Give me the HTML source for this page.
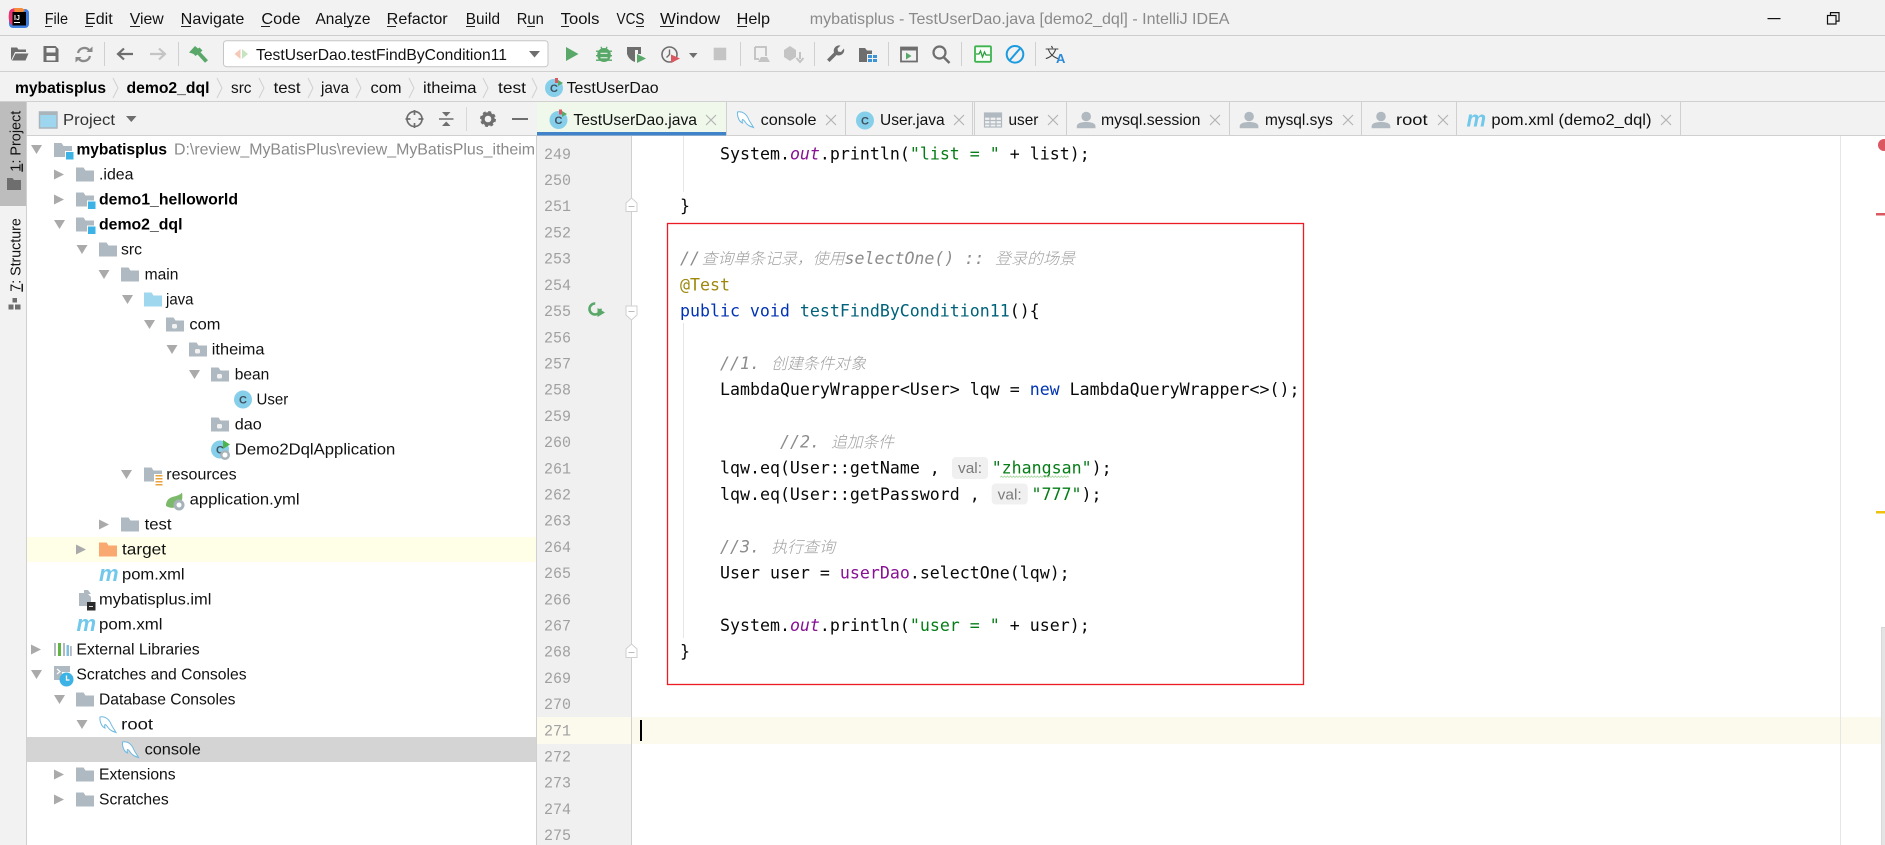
<!DOCTYPE html>
<html><head><meta charset="utf-8"><title>IntelliJ IDEA</title>
<style>
html,body{margin:0;padding:0;width:1885px;height:845px;overflow:hidden;background:#f2f2f2}
svg{display:block}
.u{font-family:"Liberation Sans","Noto Sans CJK SC",sans-serif;font-size:16px;fill:#111}
.b{font-weight:bold;fill:#000}
.c{font-family:"DejaVu Sans Mono","Liberation Mono",monospace;font-size:16.6px;fill:#080808;white-space:pre}
.n{font-family:"Liberation Mono",monospace;font-size:16px;fill:#a0a0a0}
.cm{font-style:italic;fill:#8c8c8c}
.cj{font-family:"Noto Sans CJK SC",sans-serif;font-size:15.8px;font-style:italic;fill:#a0a0a0;font-weight:300}
.k{fill:#0033b3}.s{fill:#067d17}.p{fill:#871094}.f{fill:#00627a}
.ci{font-style:italic;fill:#871094}
.cc{font-family:"Liberation Sans",sans-serif;font-size:11px;font-weight:bold;fill:#3f5260}
.mm{font-family:"Liberation Sans",sans-serif;font-size:22px;font-weight:bold;font-style:italic;fill:#72c8ea}
</style></head><body>
<svg xmlns="http://www.w3.org/2000/svg" width="1885" height="845" viewBox="0 0 1885 845">
<defs>
<path id="fd" d="M0 0h7.500l2 3H18v11H0z" fill="#afb9c1"/>
<g id="pk"><use href="#fd"/><rect x="6" y="6.500" width="5" height="4.500" rx="1.500" fill="#f2f2f2"/></g>
<g id="mod"><path d="M0 0h7.500l2 3H18v11H0z" fill="#afb9c1"/><rect x="11" y="8" width="8.500" height="8.500" fill="#fff"/><rect x="12" y="9" width="7.500" height="7.500" fill="#3db3e5"/></g>
<circle id="cl" cx="9" cy="9" r="9" fill="#86cfea"/>
<path id="ad" d="M0 0h11L5.500 9z" fill="#aaa"/>
<path id="ar" d="M0 0l10 5-10 5z" fill="#aaa"/>
<path id="x" d="M0 0l10 10M10 0L0 10" stroke="#b4b4b4" stroke-width="1.200" fill="none"/>
<g id="dol" fill="#fff" stroke="#6db8e2" stroke-width="1"><path d="M1 1C6 0 10 3 12 8c1 2.500 3 5 5 8.500-3-1-6-2-8-5-1-1.500-2-3-3-3-.5 1-.5 2 0 3.500C3 11 .5 6 1 1z"/></g>
<g id="per" fill="#b0b9c0"><circle cx="9.400" cy="5" r="4.800"/><path d="M0 16.700v-2C0 11.500 5 10.500 9.400 10.500s9.300 1 9.300 4.200v2z"/></g>
</defs>

<!-- chrome backgrounds -->
<rect width="1885" height="845" fill="#f2f2f2"/>
<rect y="35" width="1885" height="1" fill="#cdcdcd"/>
<rect y="71" width="1885" height="1" fill="#d0d0d0"/>
<rect y="101" width="1885" height="1" fill="#d0d0d0"/>
<rect y="135" width="1885" height="1" fill="#d0d0d0"/>

<!-- logo -->
<rect x="9" y="9" width="20" height="19" rx="4" fill="#3f7fe0"/>
<path d="M9 13q1-5 7-5h6l-3 6-6 12-3-3q-2-4-1-10z" fill="#e8336f"/>
<path d="M14 8h8l3 2-4 4h-6z" fill="#f68b3a"/>
<rect x="12.500" y="12" width="13.500" height="13.500" fill="#000"/>
<text x="14" y="20" font-family="Liberation Sans,sans-serif" font-size="7" font-weight="bold" fill="#fff">IJ</text>
<rect x="14" y="22" width="6" height="1" fill="#fff"/>

<!-- menu -->
<text class="u" x="44.700" y="24" textLength="23.300" lengthAdjust="spacingAndGlyphs">File</text>
<text class="u" x="85" y="24" textLength="27.700" lengthAdjust="spacingAndGlyphs">Edit</text>
<text class="u" x="129.700" y="24" textLength="34" lengthAdjust="spacingAndGlyphs">View</text>
<text class="u" x="180.700" y="24" textLength="63.700" lengthAdjust="spacingAndGlyphs">Navigate</text>
<text class="u" x="261.400" y="24" textLength="39" lengthAdjust="spacingAndGlyphs">Code</text>
<text class="u" x="315.500" y="24" textLength="55" lengthAdjust="spacingAndGlyphs">Analyze</text>
<text class="u" x="386.700" y="24" textLength="61" lengthAdjust="spacingAndGlyphs">Refactor</text>
<text class="u" x="465.800" y="24" textLength="34.200" lengthAdjust="spacingAndGlyphs">Build</text>
<text class="u" x="516.800" y="24" textLength="27" lengthAdjust="spacingAndGlyphs">Run</text>
<text class="u" x="560.700" y="24" textLength="38.700" lengthAdjust="spacingAndGlyphs">Tools</text>
<text class="u" x="616.500" y="24" textLength="28" lengthAdjust="spacingAndGlyphs">VCS</text>
<text class="u" x="660" y="24" textLength="60" lengthAdjust="spacingAndGlyphs">Window</text>
<text class="u" x="736.600" y="24" textLength="33.400" lengthAdjust="spacingAndGlyphs">Help</text>
<g fill="#222">
<rect x="45" y="26" width="7" height="1"/><rect x="85" y="26" width="8" height="1"/><rect x="130" y="26" width="10" height="1"/><rect x="181" y="26" width="10" height="1"/><rect x="261" y="26" width="9" height="1"/><rect x="344" y="26" width="8" height="1"/><rect x="387" y="26" width="9" height="1"/><rect x="466" y="26" width="9" height="1"/><rect x="527" y="26" width="8" height="1"/><rect x="561" y="26" width="8" height="1"/><rect x="636" y="26" width="8" height="1"/><rect x="660" y="26" width="14" height="1"/><rect x="737" y="26" width="10" height="1"/>
</g>
<text class="u" x="809.800" y="24" textLength="419.700" lengthAdjust="spacingAndGlyphs" style="fill:#8a8a8a">mybatisplus - TestUserDao.java [demo2_dql] - IntelliJ IDEA</text>
<rect x="1767.500" y="18" width="13" height="1.200" fill="#111"/>
<g fill="none" stroke="#111" stroke-width="1.200"><rect x="1827.500" y="15.500" width="8.500" height="8.500"/><path d="M1830.500 15.500V12.600h8.500v8.500h-3"/></g>

<!-- toolbar -->
<path d="M11 60.500V47.500h6l1.500 2H26v2.500H15l-4 8.500zm1 0l3.500-7H28.500l-3 7z" fill="#6e6e6e"/>
<path d="M43.500 46h12l3 3v13h-15zM46.500 48v4.500h9V48zM46.500 56v4.500h9V56z" fill="#6e6e6e" fill-rule="evenodd"/>
<g fill="none" stroke="#8a8a8a" stroke-width="2.300"><path d="M78 53a6.500 6.500 0 0 1 11.500-2.500"/><path d="M90 56a6.500 6.500 0 0 1-11.500 2.500"/></g>
<path d="M86.500 52h6v-5.500zM81.500 57h-6v5.500z" fill="#8a8a8a"/>
<rect x="104" y="42" width="1" height="24" fill="#d0d0d0"/>
<path d="M133 54H119M124 48.500l-6 5.500 6 5.500" fill="none" stroke="#6e6e6e" stroke-width="2.200"/>
<path d="M150 54h14M159 48.500l6 5.500-6 5.500" fill="none" stroke="#c4c4c4" stroke-width="2.200"/>
<rect x="178" y="42" width="1" height="24" fill="#d0d0d0"/>
<path d="M189 52.500l6-6.500 3 2.500 1.500-1 3 3-2 1.800 7.500 8-3 2.500-7.500-8.300-2 1.500-2-2-2-.7z" fill="#59a869"/>
<rect x="223.500" y="40.700" width="324.500" height="26" rx="3" fill="#fff" stroke="#c6c6c6"/>
<path d="M240.500 49v10l-6-5z" fill="#f6c8b8"/><path d="M242 49v10l6-5z" fill="#c5e5c0"/>
<text class="u" x="256" y="60" textLength="251" lengthAdjust="spacingAndGlyphs">TestUserDao.testFindByCondition11</text>
<path d="M529 51h11l-5.500 6.500z" fill="#6e6e6e"/>
<path d="M566 47l12.500 7-12.500 7z" fill="#59a869"/>
<g fill="#59a869"><ellipse cx="604" cy="55" rx="6.800" ry="7"/><path d="M601.500 46.500l1.500 3h2l1.500-3 1 .5-1 4h-5l-1-4z"/><rect x="596" y="50.500" width="16" height="1.400"/><rect x="596" y="55" width="16" height="1.400"/><rect x="596" y="59.500" width="16" height="1.400"/></g>
<rect x="600.500" y="52.800" width="7" height="1.100" fill="#e8f3ea"/><rect x="600.500" y="57.200" width="7" height="1.100" fill="#e8f3ea"/>
<path d="M627 47h14v7h-3v-4h-3v12q-6-2-8-8z" fill="#6e6e6e"/><path d="M637 54l9 4.500-9 4.500z" fill="#59a869"/>
<circle cx="669.500" cy="54.500" r="7.500" fill="none" stroke="#6e6e6e" stroke-width="1.600"/><path d="M669.500 49.500v5l-3 3" fill="none" stroke="#6e6e6e" stroke-width="1.400"/>
<path d="M671 54.500l9 4-9 4.500z" fill="#db5860"/>
<path d="M689 53h8.500l-4.200 5z" fill="#6e6e6e"/>
<rect x="713.700" y="47.700" width="12.500" height="12.500" fill="#c4c4c4"/>
<rect x="740" y="42" width="1" height="24" fill="#d0d0d0"/>
<path d="M755 47h11v9M755 47v12h4" fill="none" stroke="#c0c0c0" stroke-width="1.800"/><path d="M758 62l3-5h6l3 5z" fill="#c4c4c4"/>
<path d="M784 50l6-4 6 4v7l-6 4-6-4z" fill="#c4c4c4"/><path d="M800 52v7M796.500 58l3.500 4 3.500-4" fill="none" stroke="#c4c4c4" stroke-width="2"/>
<rect x="814" y="42" width="1" height="24" fill="#d0d0d0"/>
<path d="M844 48.500a5.500 5.500 0 0 1-7.500 6.500l-7 7-2.500-2.500 7-7a5.500 5.500 0 0 1 6.500-7l-3 3 .5 3 3 .5z" fill="#6e6e6e"/>
<path d="M859 48h6l2 2.500h5v3.500h-5v8h-8z" fill="#6e6e6e"/><g fill="#3d93d3"><rect x="868" y="55" width="4" height="3"/><rect x="873" y="55" width="4" height="3"/><rect x="868" y="59" width="4" height="3"/><rect x="873" y="59" width="4" height="3"/></g>
<rect x="888" y="42" width="1" height="24" fill="#d0d0d0"/>
<rect x="901" y="47.500" width="16" height="14" fill="none" stroke="#6e6e6e" stroke-width="1.800"/><rect x="901" y="47.500" width="16" height="3" fill="#6e6e6e"/><path d="M906 52.500l5.500 3.500-5.500 3.500z" fill="#59a869"/>
<circle cx="939.500" cy="52.500" r="6" fill="none" stroke="#6e6e6e" stroke-width="2.200"/><path d="M943.500 57l6 6" stroke="#6e6e6e" stroke-width="2.500"/>
<rect x="961" y="42" width="1" height="24" fill="#d0d0d0"/>
<rect x="975" y="46.300" width="16" height="15.500" rx="1" fill="#f7fff7" stroke="#3eb34f" stroke-width="1.800"/><path d="M976 54h3l1.500-3 2 6 2-5 1.500 3h4" fill="none" stroke="#2e9e40" stroke-width="1.300"/>
<circle cx="1015" cy="54.300" r="8.300" fill="none" stroke="#1d9be0" stroke-width="2"/><path d="M1010 60l10-11.500" stroke="#1d9be0" stroke-width="2"/>
<rect x="1035" y="42" width="1" height="24" fill="#d0d0d0"/>
<text x="1045" y="58" font-family="Noto Sans CJK SC,sans-serif" font-size="14" fill="#444">文</text>
<text x="1056" y="63" font-family="Liberation Sans,sans-serif" font-weight="bold" font-size="13" fill="#2d8ad6">A</text>

<!-- breadcrumbs -->
<text class="u b" x="15" y="93" textLength="91" lengthAdjust="spacingAndGlyphs">mybatisplus</text>
<text class="u b" x="126.500" y="93" textLength="83" lengthAdjust="spacingAndGlyphs">demo2_dql</text>
<text class="u" x="231" y="93" textLength="20.500" lengthAdjust="spacingAndGlyphs">src</text>
<text class="u" x="273.600" y="93" textLength="27" lengthAdjust="spacingAndGlyphs">test</text>
<text class="u" x="321" y="93" textLength="28" lengthAdjust="spacingAndGlyphs">java</text>
<text class="u" x="370.500" y="93" textLength="31" lengthAdjust="spacingAndGlyphs">com</text>
<text class="u" x="423" y="93" textLength="53.500" lengthAdjust="spacingAndGlyphs">itheima</text>
<text class="u" x="498" y="93" textLength="28" lengthAdjust="spacingAndGlyphs">test</text>
<text class="u" x="566.600" y="93" textLength="92" lengthAdjust="spacingAndGlyphs">TestUserDao</text>
<g fill="none" stroke="#d0d0d0" stroke-width="1"><path d="M113 78l5 10-5 10M217 78l5 10-5 10M259 78l5 10-5 10M308 78l5 10-5 10M356 78l5 10-5 10M409 78l5 10-5 10M483 78l5 10-5 10M532 78l5 10-5 10"/></g>
<use href="#cl" x="545" y="79"/><text class="cc" x="550" y="92">C</text><path d="M558 80l5 3-5 3z" fill="#59a869"/><rect x="555" y="78" width="3" height="5" fill="#db5860"/>

<!-- left strip -->
<rect x="0" y="102" width="26" height="104" fill="#bdbdbd"/>
<rect x="26" y="102" width="1" height="743" fill="#d0d0d0"/>
<text class="u" transform="translate(20.500,171.700) rotate(-90)" style="font-size:14.500px" textLength="61" lengthAdjust="spacingAndGlyphs"><tspan text-decoration="underline">1</tspan>: Project</text>
<path d="M7 178h5.500l1.500 2h7v10H7z" fill="#6e6e6e"/>
<text class="u" transform="translate(20.500,291.700) rotate(-90)" style="font-size:14.500px" textLength="73.500" lengthAdjust="spacingAndGlyphs"><tspan text-decoration="underline">7</tspan>: Structure</text>
<g fill="#6e6e6e"><rect x="12.500" y="298" width="4.500" height="4.500"/><rect x="8.500" y="304.500" width="5" height="5"/><rect x="15" y="304.500" width="5.500" height="5"/></g>

<!-- project header -->
<rect x="39.500" y="112" width="17.500" height="16" fill="#9fd6ef" stroke="#a9b4bb" stroke-width="1.500"/>
<rect x="39.500" y="112" width="17.500" height="3" fill="#a9b4bb"/>
<text class="u" x="63" y="125" textLength="52" lengthAdjust="spacingAndGlyphs" style="fill:#333">Project</text>
<path d="M126 116h10.500l-5.200 6z" fill="#6e6e6e"/>
<circle cx="414.500" cy="119" r="7.500" fill="none" stroke="#6e6e6e" stroke-width="1.700"/><path d="M414.500 110v5M414.500 123v5M405.500 119h5M418.500 119h5" stroke="#6e6e6e" stroke-width="1.700"/>
<path d="M439 119h14.500" stroke="#6e6e6e" stroke-width="1.500"/><path d="M442 112h8.500l-4.250 4.500zM442 126h8.500l-4.250-4.500z" fill="#6e6e6e"/>
<rect x="466" y="107" width="1" height="24" fill="#d8d8d8"/>
<circle cx="488" cy="119" r="5" fill="none" stroke="#6e6e6e" stroke-width="3.400"/><circle cx="488" cy="119" r="7" fill="none" stroke="#6e6e6e" stroke-width="2" stroke-dasharray="3 2.500"/>
<rect x="512" y="118" width="16" height="2" fill="#6e6e6e"/>

<!-- tree -->
<rect x="27" y="136" width="509" height="709" fill="#fff"/>
<rect x="536" y="136" width="1" height="709" fill="#d0d0d0"/>
<rect x="27" y="537" width="509" height="25" fill="#fffee6"/>
<rect x="27" y="737" width="509" height="25" fill="#d4d4d4"/>

<use href="#ad" x="31" y="145"/><use href="#mod" x="54" y="143"/>
<text class="u b" x="76.500" y="154.500" textLength="90.500" lengthAdjust="spacingAndGlyphs">mybatisplus</text>
<text class="u" x="174" y="154.500" textLength="361" lengthAdjust="spacingAndGlyphs" style="fill:#8a8a8a">D:\review_MyBatisPlus\review_MyBatisPlus_itheim</text>

<use href="#ar" x="54" y="169.500"/><use href="#fd" x="76" y="167.500"/>
<text class="u" x="99" y="179.500" textLength="34.500" lengthAdjust="spacingAndGlyphs">.idea</text>

<use href="#ar" x="54" y="194.500"/><use href="#mod" x="76" y="192.500"/>
<text class="u b" x="99" y="204.500" textLength="139" lengthAdjust="spacingAndGlyphs">demo1_helloworld</text>

<use href="#ad" x="54" y="220"/><use href="#mod" x="76" y="217.500"/>
<text class="u b" x="99" y="229.500" textLength="83.500" lengthAdjust="spacingAndGlyphs">demo2_dql</text>

<use href="#ad" x="76.500" y="245"/><use href="#fd" x="99" y="242.500"/>
<text class="u" x="121" y="254.500" textLength="21" lengthAdjust="spacingAndGlyphs">src</text>

<use href="#ad" x="98.500" y="270"/><use href="#fd" x="121" y="267.500"/>
<text class="u" x="144.600" y="279.500" textLength="33.800" lengthAdjust="spacingAndGlyphs">main</text>

<use href="#ad" x="122" y="295"/><path d="M144 292.500h7.500l2 3H162v11h-18z" fill="#9fd7ee"/>
<text class="u" x="166" y="304.500" textLength="27.500" lengthAdjust="spacingAndGlyphs">java</text>

<use href="#ad" x="144" y="320"/><use href="#pk" x="166" y="317.500"/>
<text class="u" x="189.400" y="329.500" textLength="31" lengthAdjust="spacingAndGlyphs">com</text>

<use href="#ad" x="166.500" y="345"/><use href="#pk" x="189" y="342.500"/>
<text class="u" x="211.800" y="354.500" textLength="52.700" lengthAdjust="spacingAndGlyphs">itheima</text>

<use href="#ad" x="189" y="370"/><use href="#pk" x="211" y="367.500"/>
<text class="u" x="234.800" y="379.500" textLength="34.500" lengthAdjust="spacingAndGlyphs">bean</text>

<use href="#cl" x="234" y="390.500"/><text class="cc" x="239" y="403.500">C</text>
<text class="u" x="256.500" y="404.500" textLength="31.700" lengthAdjust="spacingAndGlyphs">User</text>

<use href="#pk" x="211" y="417.500"/>
<text class="u" x="234.800" y="429.500" textLength="27" lengthAdjust="spacingAndGlyphs">dao</text>

<use href="#cl" x="211" y="440.500"/><text class="cc" x="216" y="453.500">C</text><path d="M223 440l7 4.500-7 4.500z" fill="#4db34f"/><circle cx="225" cy="455" r="5" fill="#aab4bb"/><circle cx="225" cy="455" r="2.500" fill="#fff"/>
<text class="u" x="234.800" y="454.500" textLength="160.500" lengthAdjust="spacingAndGlyphs">Demo2DqlApplication</text>

<use href="#ad" x="121" y="470"/><use href="#fd" x="144" y="467.500"/>
<rect x="154" y="474" width="9" height="11" fill="#fff"/><g fill="#e8a33d"><rect x="155.500" y="475" width="7" height="1.500"/><rect x="155.500" y="478" width="7" height="1.500"/><rect x="155.500" y="481" width="7" height="1.500"/><rect x="155.500" y="484" width="7" height="1.500"/></g>
<text class="u" x="166.300" y="479.500" textLength="70.300" lengthAdjust="spacingAndGlyphs">resources</text>

<path d="M166 506c0-8 6-9 10-10 3-1 5-2 6-3.500 1 5 0 10-3 13-4 3-9 3-13 .5z" fill="#7db96b"/><circle cx="179" cy="505" r="5.500" fill="#a7b2ba"/><circle cx="179" cy="505" r="2.500" fill="#fff"/>
<text class="u" x="189.700" y="504.500" textLength="109.900" lengthAdjust="spacingAndGlyphs">application.yml</text>

<use href="#ar" x="99" y="519.500"/><use href="#fd" x="121" y="517.500"/>
<text class="u" x="144.600" y="529.500" textLength="26.900" lengthAdjust="spacingAndGlyphs">test</text>

<use href="#ar" x="76" y="544.500"/><path d="M99 542.500h7.500l2 3H117v11H99z" fill="#f9a870"/>
<text class="u" x="122" y="554.500" textLength="44" lengthAdjust="spacingAndGlyphs">target</text>

<text class="mm" x="99" y="581">m</text>
<text class="u" x="122" y="579.500" textLength="62.600" lengthAdjust="spacingAndGlyphs">pom.xml</text>

<path d="M79 593h8l4 4v9H79z" fill="#afb9c1"/><path d="M84 590h4l3 4h-7z" fill="#afb9c1"/><rect x="87" y="602" width="8.500" height="8.500" fill="#2b2b2b"/><rect x="89" y="606" width="4" height="1" fill="#ddd"/>
<text class="u" x="99" y="604.500" textLength="112.400" lengthAdjust="spacingAndGlyphs">mybatisplus.iml</text>

<text class="mm" x="76.500" y="631">m</text>
<text class="u" x="99" y="629.500" textLength="63.500" lengthAdjust="spacingAndGlyphs">pom.xml</text>

<use href="#ar" x="31" y="644.500"/>
<g><rect x="54" y="643" width="2" height="13" fill="#afb9c1"/><rect x="58" y="643" width="3" height="13" fill="#62b543"/><rect x="63" y="643" width="2" height="13" fill="#afb9c1"/><rect x="66.500" y="645" width="2.500" height="11" fill="#7fbfe0"/><rect x="70" y="646" width="1.800" height="10" fill="#afb9c1"/></g>
<text class="u" x="76.400" y="654.500" textLength="123.300" lengthAdjust="spacingAndGlyphs">External Libraries</text>

<use href="#ad" x="31" y="670"/>
<path d="M54 666h16v6h-8v8h-8z" fill="#afb9c1"/><path d="M57 669l3 2.500-3 2.500" fill="none" stroke="#fff" stroke-width="1.200"/>
<circle cx="66.500" cy="679.500" r="7" fill="#3db3e5"/><path d="M66.500 675.500v4.500h3" fill="none" stroke="#fff" stroke-width="1.300"/>
<text class="u" x="76.400" y="679.500" textLength="170.200" lengthAdjust="spacingAndGlyphs">Scratches and Consoles</text>

<use href="#ad" x="54" y="695"/><use href="#fd" x="76" y="692.500"/>
<text class="u" x="99" y="704.500" textLength="136.500" lengthAdjust="spacingAndGlyphs">Database Consoles</text>

<use href="#ad" x="76.500" y="720"/><use href="#dol" x="99" y="716"/>
<text class="u" x="121.200" y="729.500" textLength="31.800" lengthAdjust="spacingAndGlyphs">root</text>

<use href="#dol" x="121.500" y="741"/>
<text class="u" x="144.600" y="754.500" textLength="56.200" lengthAdjust="spacingAndGlyphs">console</text>

<use href="#ar" x="54" y="769.500"/><use href="#fd" x="76" y="767.500"/>
<text class="u" x="99" y="779.500" textLength="76.600" lengthAdjust="spacingAndGlyphs">Extensions</text>

<use href="#ar" x="54" y="794.500"/><use href="#fd" x="76" y="792.500"/>
<text class="u" x="99" y="804.500" textLength="69.700" lengthAdjust="spacingAndGlyphs">Scratches</text>

<!-- tabs -->
<rect x="537" y="102" width="189" height="33" fill="#eff8ea"/>
<rect x="537" y="132" width="189" height="3.500" fill="#4083c9"/>
<g fill="#d0d0d0"><rect x="726" y="102" width="1" height="33"/><rect x="845" y="102" width="1" height="33"/><rect x="972" y="102" width="1" height="33"/><rect x="974" y="102" width="1" height="33"/><rect x="1066" y="102" width="1" height="33"/><rect x="1229" y="102" width="1" height="33"/><rect x="1361" y="102" width="1" height="33"/><rect x="1456" y="102" width="1" height="33"/><rect x="1680" y="102" width="1" height="33"/></g>

<use href="#cl" x="549.500" y="111"/><text class="cc" x="554.500" y="124">C</text><path d="M562 111l5 3-5 3z" fill="#59a869"/><rect x="559" y="109.500" width="3" height="5" fill="#db5860"/>
<text class="u" x="573.400" y="125" textLength="123.600" lengthAdjust="spacingAndGlyphs">TestUserDao.java</text>
<use href="#x" x="706" y="115"/>

<use href="#dol" x="736.500" y="111"/>
<text class="u" x="760.700" y="125" textLength="55.800" lengthAdjust="spacingAndGlyphs">console</text>
<use href="#x" x="826" y="115"/>

<use href="#cl" x="856" y="111.500"/><text class="cc" x="861" y="124.500">C</text>
<text class="u" x="880" y="125" textLength="64.600" lengthAdjust="spacingAndGlyphs">User.java</text>
<use href="#x" x="954" y="115"/>

<g fill="none" stroke="#b0b9c0" stroke-width="1.200"><rect x="984.500" y="113" width="17" height="14"/><path d="M984.500 117h17M984.500 120.500h17M984.500 124h17M990 117v10M996 117v10"/></g><rect x="984" y="112.500" width="18" height="4" fill="#b0b9c0"/>
<text class="u" x="1008.500" y="125" textLength="29.900" lengthAdjust="spacingAndGlyphs">user</text>
<use href="#x" x="1048" y="115"/>

<use href="#per" x="1076.800" y="111.500"/>
<text class="u" x="1101" y="125" textLength="99.400" lengthAdjust="spacingAndGlyphs">mysql.session</text>
<use href="#x" x="1210" y="115"/>

<use href="#per" x="1239.700" y="111.500"/>
<text class="u" x="1265" y="125" textLength="67.800" lengthAdjust="spacingAndGlyphs">mysql.sys</text>
<use href="#x" x="1343" y="115"/>

<use href="#per" x="1371.600" y="111.500"/>
<text class="u" x="1396" y="125" textLength="31.600" lengthAdjust="spacingAndGlyphs">root</text>
<use href="#x" x="1438" y="115"/>

<text class="mm" x="1466.500" y="126.500">m</text>
<text class="u" x="1491.400" y="125" textLength="160.100" lengthAdjust="spacingAndGlyphs">pom.xml (demo2_dql)</text>
<use href="#x" x="1661" y="115"/>

<!-- editor -->
<rect x="537" y="136" width="95" height="709" fill="#f0f0f0"/>
<rect x="632" y="136" width="1253" height="709" fill="#fff"/>
<rect x="537" y="717" width="1344" height="27" fill="#fcfaed"/>
<rect x="631" y="136" width="1" height="709" fill="#d0d0d0"/>
<rect x="1840" y="136" width="1" height="709" fill="#e6e6e6"/>
<rect x="1881" y="627" width="4" height="218" fill="#e4e4e4"/>
<rect x="1881" y="627" width="4" height="1" fill="#d4d4d4"/>
<rect x="1881" y="627" width="1" height="218" fill="#d8d8d8"/>
<circle cx="1884" cy="145" r="6" fill="#db5860"/>
<rect x="1876" y="213" width="9" height="2.500" fill="#db5860"/>
<rect x="1876" y="511" width="9" height="2.500" fill="#edc20e"/>

<!-- indent guides -->
<rect x="683" y="136" width="1" height="56" fill="#e6e6e6"/>
<rect x="683" y="323" width="1" height="315" fill="#e6e6e6"/>

<!-- line numbers -->
<text class="n" x="544" y="159" textLength="27" lengthAdjust="spacingAndGlyphs">249</text>
<text class="n" x="544" y="185" textLength="27" lengthAdjust="spacingAndGlyphs">250</text>
<text class="n" x="544" y="211" textLength="27" lengthAdjust="spacingAndGlyphs">251</text>
<text class="n" x="544" y="237.500" textLength="27" lengthAdjust="spacingAndGlyphs">252</text>
<text class="n" x="544" y="263.700" textLength="27" lengthAdjust="spacingAndGlyphs">253</text>
<text class="n" x="544" y="289.900" textLength="27" lengthAdjust="spacingAndGlyphs">254</text>
<text class="n" x="544" y="316" textLength="27" lengthAdjust="spacingAndGlyphs">255</text>
<text class="n" x="544" y="342.300" textLength="27" lengthAdjust="spacingAndGlyphs">256</text>
<text class="n" x="544" y="368.500" textLength="27" lengthAdjust="spacingAndGlyphs">257</text>
<text class="n" x="544" y="394.700" textLength="27" lengthAdjust="spacingAndGlyphs">258</text>
<text class="n" x="544" y="420.900" textLength="27" lengthAdjust="spacingAndGlyphs">259</text>
<text class="n" x="544" y="447" textLength="27" lengthAdjust="spacingAndGlyphs">260</text>
<text class="n" x="544" y="473.300" textLength="27" lengthAdjust="spacingAndGlyphs">261</text>
<text class="n" x="544" y="499.500" textLength="27" lengthAdjust="spacingAndGlyphs">262</text>
<text class="n" x="544" y="525.700" textLength="27" lengthAdjust="spacingAndGlyphs">263</text>
<text class="n" x="544" y="551.900" textLength="27" lengthAdjust="spacingAndGlyphs">264</text>
<text class="n" x="544" y="578" textLength="27" lengthAdjust="spacingAndGlyphs">265</text>
<text class="n" x="544" y="604.300" textLength="27" lengthAdjust="spacingAndGlyphs">266</text>
<text class="n" x="544" y="630.500" textLength="27" lengthAdjust="spacingAndGlyphs">267</text>
<text class="n" x="544" y="656.700" textLength="27" lengthAdjust="spacingAndGlyphs">268</text>
<text class="n" x="544" y="682.900" textLength="27" lengthAdjust="spacingAndGlyphs">269</text>
<text class="n" x="544" y="709" textLength="27" lengthAdjust="spacingAndGlyphs">270</text>
<text class="n" x="544" y="735.300" textLength="27" lengthAdjust="spacingAndGlyphs">271</text>
<text class="n" x="544" y="761.500" textLength="27" lengthAdjust="spacingAndGlyphs">272</text>
<text class="n" x="544" y="787.700" textLength="27" lengthAdjust="spacingAndGlyphs">273</text>
<text class="n" x="544" y="813.900" textLength="27" lengthAdjust="spacingAndGlyphs">274</text>
<text class="n" x="544" y="840" textLength="27" lengthAdjust="spacingAndGlyphs">275</text>

<!-- fold marks, run icon -->
<g fill="#fff" stroke="#cfcfcf"><path d="M626 203l5.500-5 5.500 5v8.500h-11z"/><path d="M626 306h11v9l-5.500 5-5.500-5z"/><path d="M626 649l5.500-5 5.500 5v8.500h-11z"/></g>
<path d="M628.500 206.500h6M628.500 311.500h6M628.500 652.500h6" stroke="#bbb"/>
<circle cx="595" cy="309" r="5.500" fill="none" stroke="#59a869" stroke-width="2.600" stroke-dasharray="26 8"/>
<path d="M597.500 308l7.500 4.500-7.500 4.500z" fill="#59a869"/>

<!-- code -->
<text class="c" x="720" y="159.300">System.<tspan class="ci">out</tspan>.println(<tspan class="s">"list = "</tspan> + list);</text>
<text class="c" x="680" y="211.700">}</text>

<text class="c cm" x="680" y="264.100">//</text>
<text class="cj" x="701.700" y="264.100" textLength="142.800" lengthAdjust="spacingAndGlyphs">查询单条记录，使用</text>
<text class="c cm" x="844.500" y="264.100">selectOne() ::</text>
<text class="cj" x="995" y="264.100" textLength="80" lengthAdjust="spacingAndGlyphs">登录的场景</text>

<text class="c" x="680" y="290.300" style="fill:#9e880d">@Test</text>
<text class="c" x="680" y="316.500"><tspan class="k">public void</tspan> <tspan class="f">testFindByCondition11</tspan>(){</text>

<text class="c cm" x="720" y="368.900">//1.</text>
<text class="cj" x="771.300" y="368.900" textLength="94.700" lengthAdjust="spacingAndGlyphs">创建条件对象</text>

<text class="c" x="720" y="395.100">LambdaQueryWrapper&lt;User&gt; lqw = <tspan class="k">new</tspan> LambdaQueryWrapper&lt;&gt;();</text>

<text class="c cm" x="780" y="447.500">//2.</text>
<text class="cj" x="831" y="447.500" textLength="63" lengthAdjust="spacingAndGlyphs">追加条件</text>

<text class="c" x="720" y="473.700">lqw.eq(User::getName ,</text>
<rect x="952" y="457" width="36" height="22" rx="4" fill="#f0f0f0"/>
<text class="u" x="958" y="473" textLength="24" lengthAdjust="spacingAndGlyphs" style="font-size:15px;fill:#7a7a7a">val:</text>
<text class="c" x="991.700" y="473.700"><tspan class="s">"zhangsan"</tspan>);</text>
<path d="M1000 477.500l1.500-1.500 1.500 1.500 1.500-1.500 1.500 1.500 1.500-1.500 1.500 1.500 1.500-1.500 1.500 1.500 1.500-1.500 1.500 1.500 1.500-1.500 1.500 1.500 1.500-1.500 1.500 1.500 1.500-1.500 1.500 1.500 1.500-1.500 1.500 1.500 1.500-1.500 1.500 1.500 1.500-1.500 1.500 1.500 1.500-1.500 1.500 1.500 1.500-1.500 1.500 1.500 1.500-1.500 1.500 1.500 1.500-1.500 1.500 1.500 1.500-1.500 1.500 1.500 1.500-1.500 1.500 1.500 1.500-1.500 1.500 1.500 1.500-1.500 1.500 1.500 1.500-1.500 1.500 1.500 1.500-1.500 1.500 1.500 1.500-1.500 1.500 1.500 1.500-1.500 1.500 1.500" fill="none" stroke="#a8d8a0" stroke-width=".8"/>

<text class="c" x="720" y="499.900">lqw.eq(User::getPassword ,</text>
<rect x="991.700" y="483.500" width="36" height="21" rx="4" fill="#f0f0f0"/>
<text class="u" x="997.700" y="499.500" textLength="24" lengthAdjust="spacingAndGlyphs" style="font-size:15px;fill:#7a7a7a">val:</text>
<text class="c" x="1031.500" y="499.900"><tspan class="s">"777"</tspan>);</text>

<text class="c cm" x="720" y="552.300">//3.</text>
<text class="cj" x="771.300" y="552.300" textLength="63.700" lengthAdjust="spacingAndGlyphs">执行查询</text>

<text class="c" x="720" y="578.500">User user = <tspan class="p">userDao</tspan>.selectOne(lqw);</text>
<text class="c" x="720" y="630.900">System.<tspan class="ci">out</tspan>.println(<tspan class="s">"user = "</tspan> + user);</text>
<text class="c" x="680" y="657.100">}</text>

<!-- caret -->
<rect x="640" y="720" width="2" height="21" fill="#000"/>

<!-- red annotation box -->
<rect x="667.500" y="223.500" width="636" height="461" fill="none" stroke="#ed1c24" stroke-width="1.300"/>
</svg>
</body></html>
